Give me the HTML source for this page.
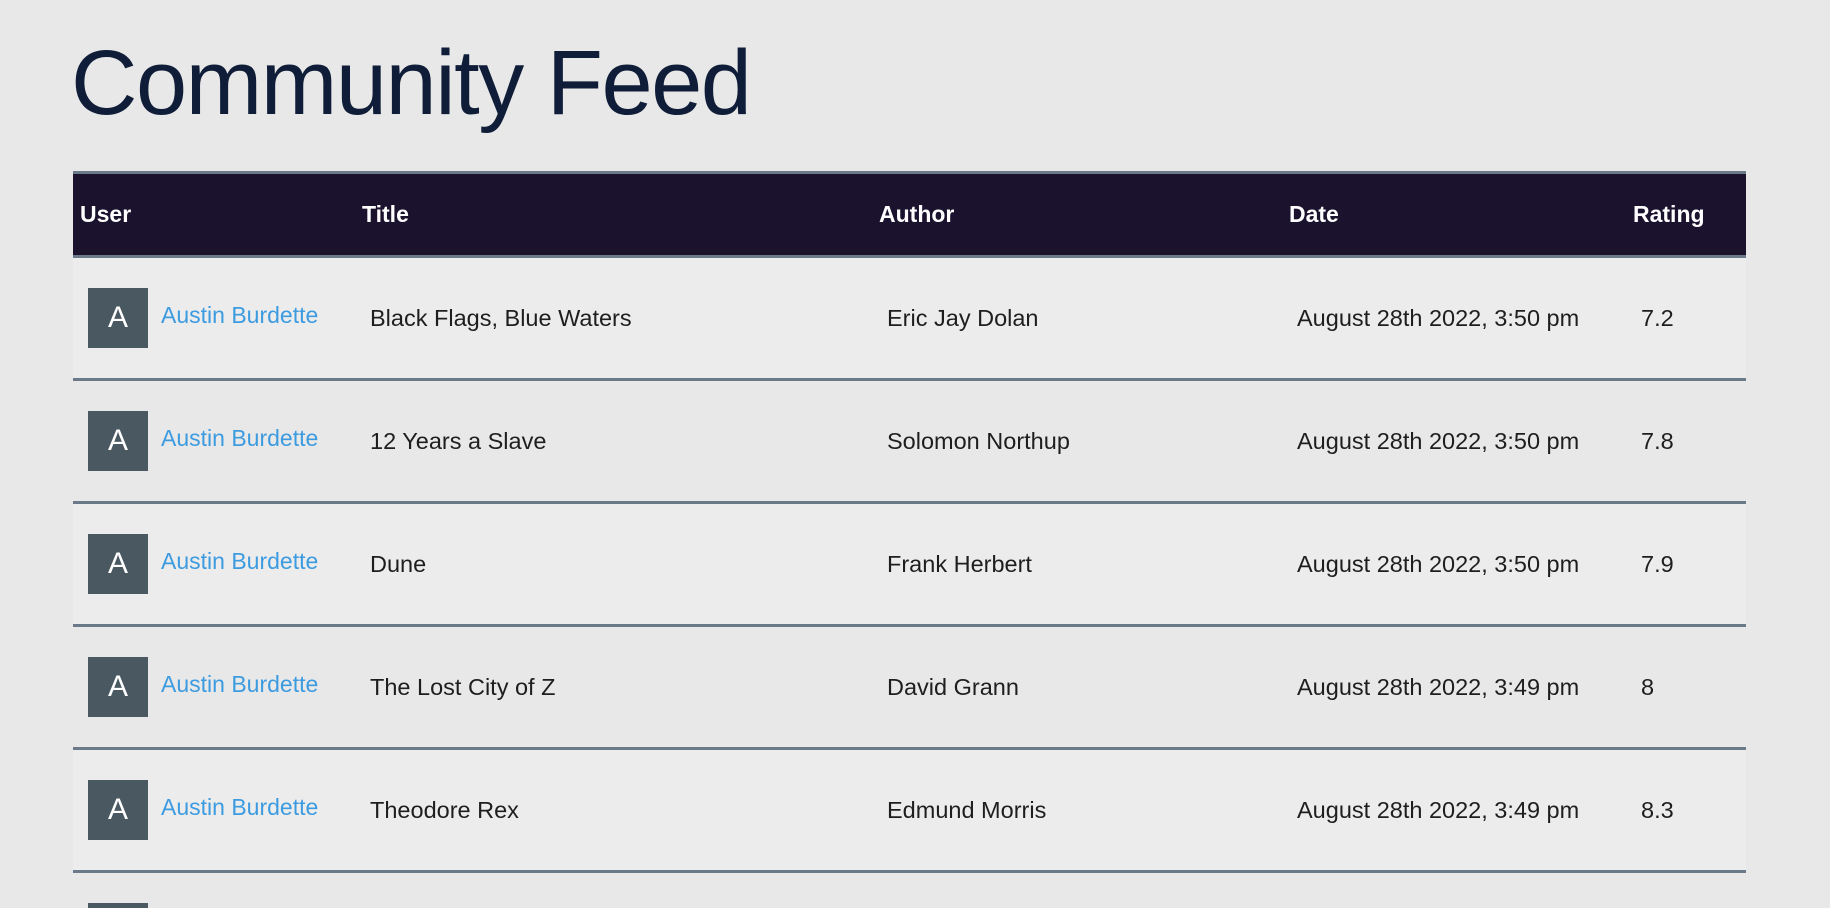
<!DOCTYPE html>
<html style="height:908px;overflow:hidden"><head><meta charset="utf-8"><style>
*{box-sizing:border-box}
body{margin:0;background:#e8e8e8;font-family:"Liberation Sans",Arial,sans-serif;width:1830px;height:908px;overflow:hidden;position:relative}
h1{position:absolute;left:71px;top:31px;margin:0;font-size:92px;font-weight:400;color:#0f1d38;letter-spacing:-1.5px}
.t{position:absolute;left:73px;top:171px;width:1673px}
.r{display:flex;align-items:center;border-bottom:3px solid #6a7a88}
.h{background:#1b122e;border-top:3px solid #6a7a88;height:87px;color:#fff;font-weight:bold;font-size:23px}
.h div{padding-left:7px}
.b{height:123px;font-size:23.5px;color:#1e1e1e}
.b:nth-child(even){background:#ececec}
.b div.c{padding-left:15px}
.c1,.c2,.c3,.c4,.c5{flex:none}
.c1{width:282px}.c2{width:517px}.c3{width:410px}.c4{width:344px}.c5{width:120px}
.u{display:flex;align-items:center}
.av{width:60px;height:60px;background:#4a5862;color:#fff;font-size:30px;display:flex;align-items:center;justify-content:center;margin-right:13px;flex:none}
.n{color:#3d9be0;margin-top:-6px;white-space:nowrap;font-size:23px}
</style></head><body>
<h1>Community Feed</h1>
<div class="t">
<div class="r h"><div class="c1">User</div><div class="c2">Title</div><div class="c3">Author</div><div class="c4">Date</div><div class="c5">Rating</div></div>
<div class="r b"><div class="c c1 u"><span class="av">A</span><span class="n">Austin Burdette</span></div><div class="c c2">Black Flags, Blue Waters</div><div class="c c3">Eric Jay Dolan</div><div class="c c4">August 28th 2022, 3:50 pm</div><div class="c c5">7.2</div></div>
<div class="r b"><div class="c c1 u"><span class="av">A</span><span class="n">Austin Burdette</span></div><div class="c c2">12 Years a Slave</div><div class="c c3">Solomon Northup</div><div class="c c4">August 28th 2022, 3:50 pm</div><div class="c c5">7.8</div></div>
<div class="r b"><div class="c c1 u"><span class="av">A</span><span class="n">Austin Burdette</span></div><div class="c c2">Dune</div><div class="c c3">Frank Herbert</div><div class="c c4">August 28th 2022, 3:50 pm</div><div class="c c5">7.9</div></div>
<div class="r b"><div class="c c1 u"><span class="av">A</span><span class="n">Austin Burdette</span></div><div class="c c2">The Lost City of Z</div><div class="c c3">David Grann</div><div class="c c4">August 28th 2022, 3:49 pm</div><div class="c c5">8</div></div>
<div class="r b"><div class="c c1 u"><span class="av">A</span><span class="n">Austin Burdette</span></div><div class="c c2">Theodore Rex</div><div class="c c3">Edmund Morris</div><div class="c c4">August 28th 2022, 3:49 pm</div><div class="c c5">8.3</div></div>
<div class="r b"><div class="c c1 u"><span class="av">A</span><span class="n">Austin Burdette</span></div><div class="c c2"></div><div class="c c3"></div><div class="c c4"></div><div class="c c5"></div></div>
</div>
</body></html>
